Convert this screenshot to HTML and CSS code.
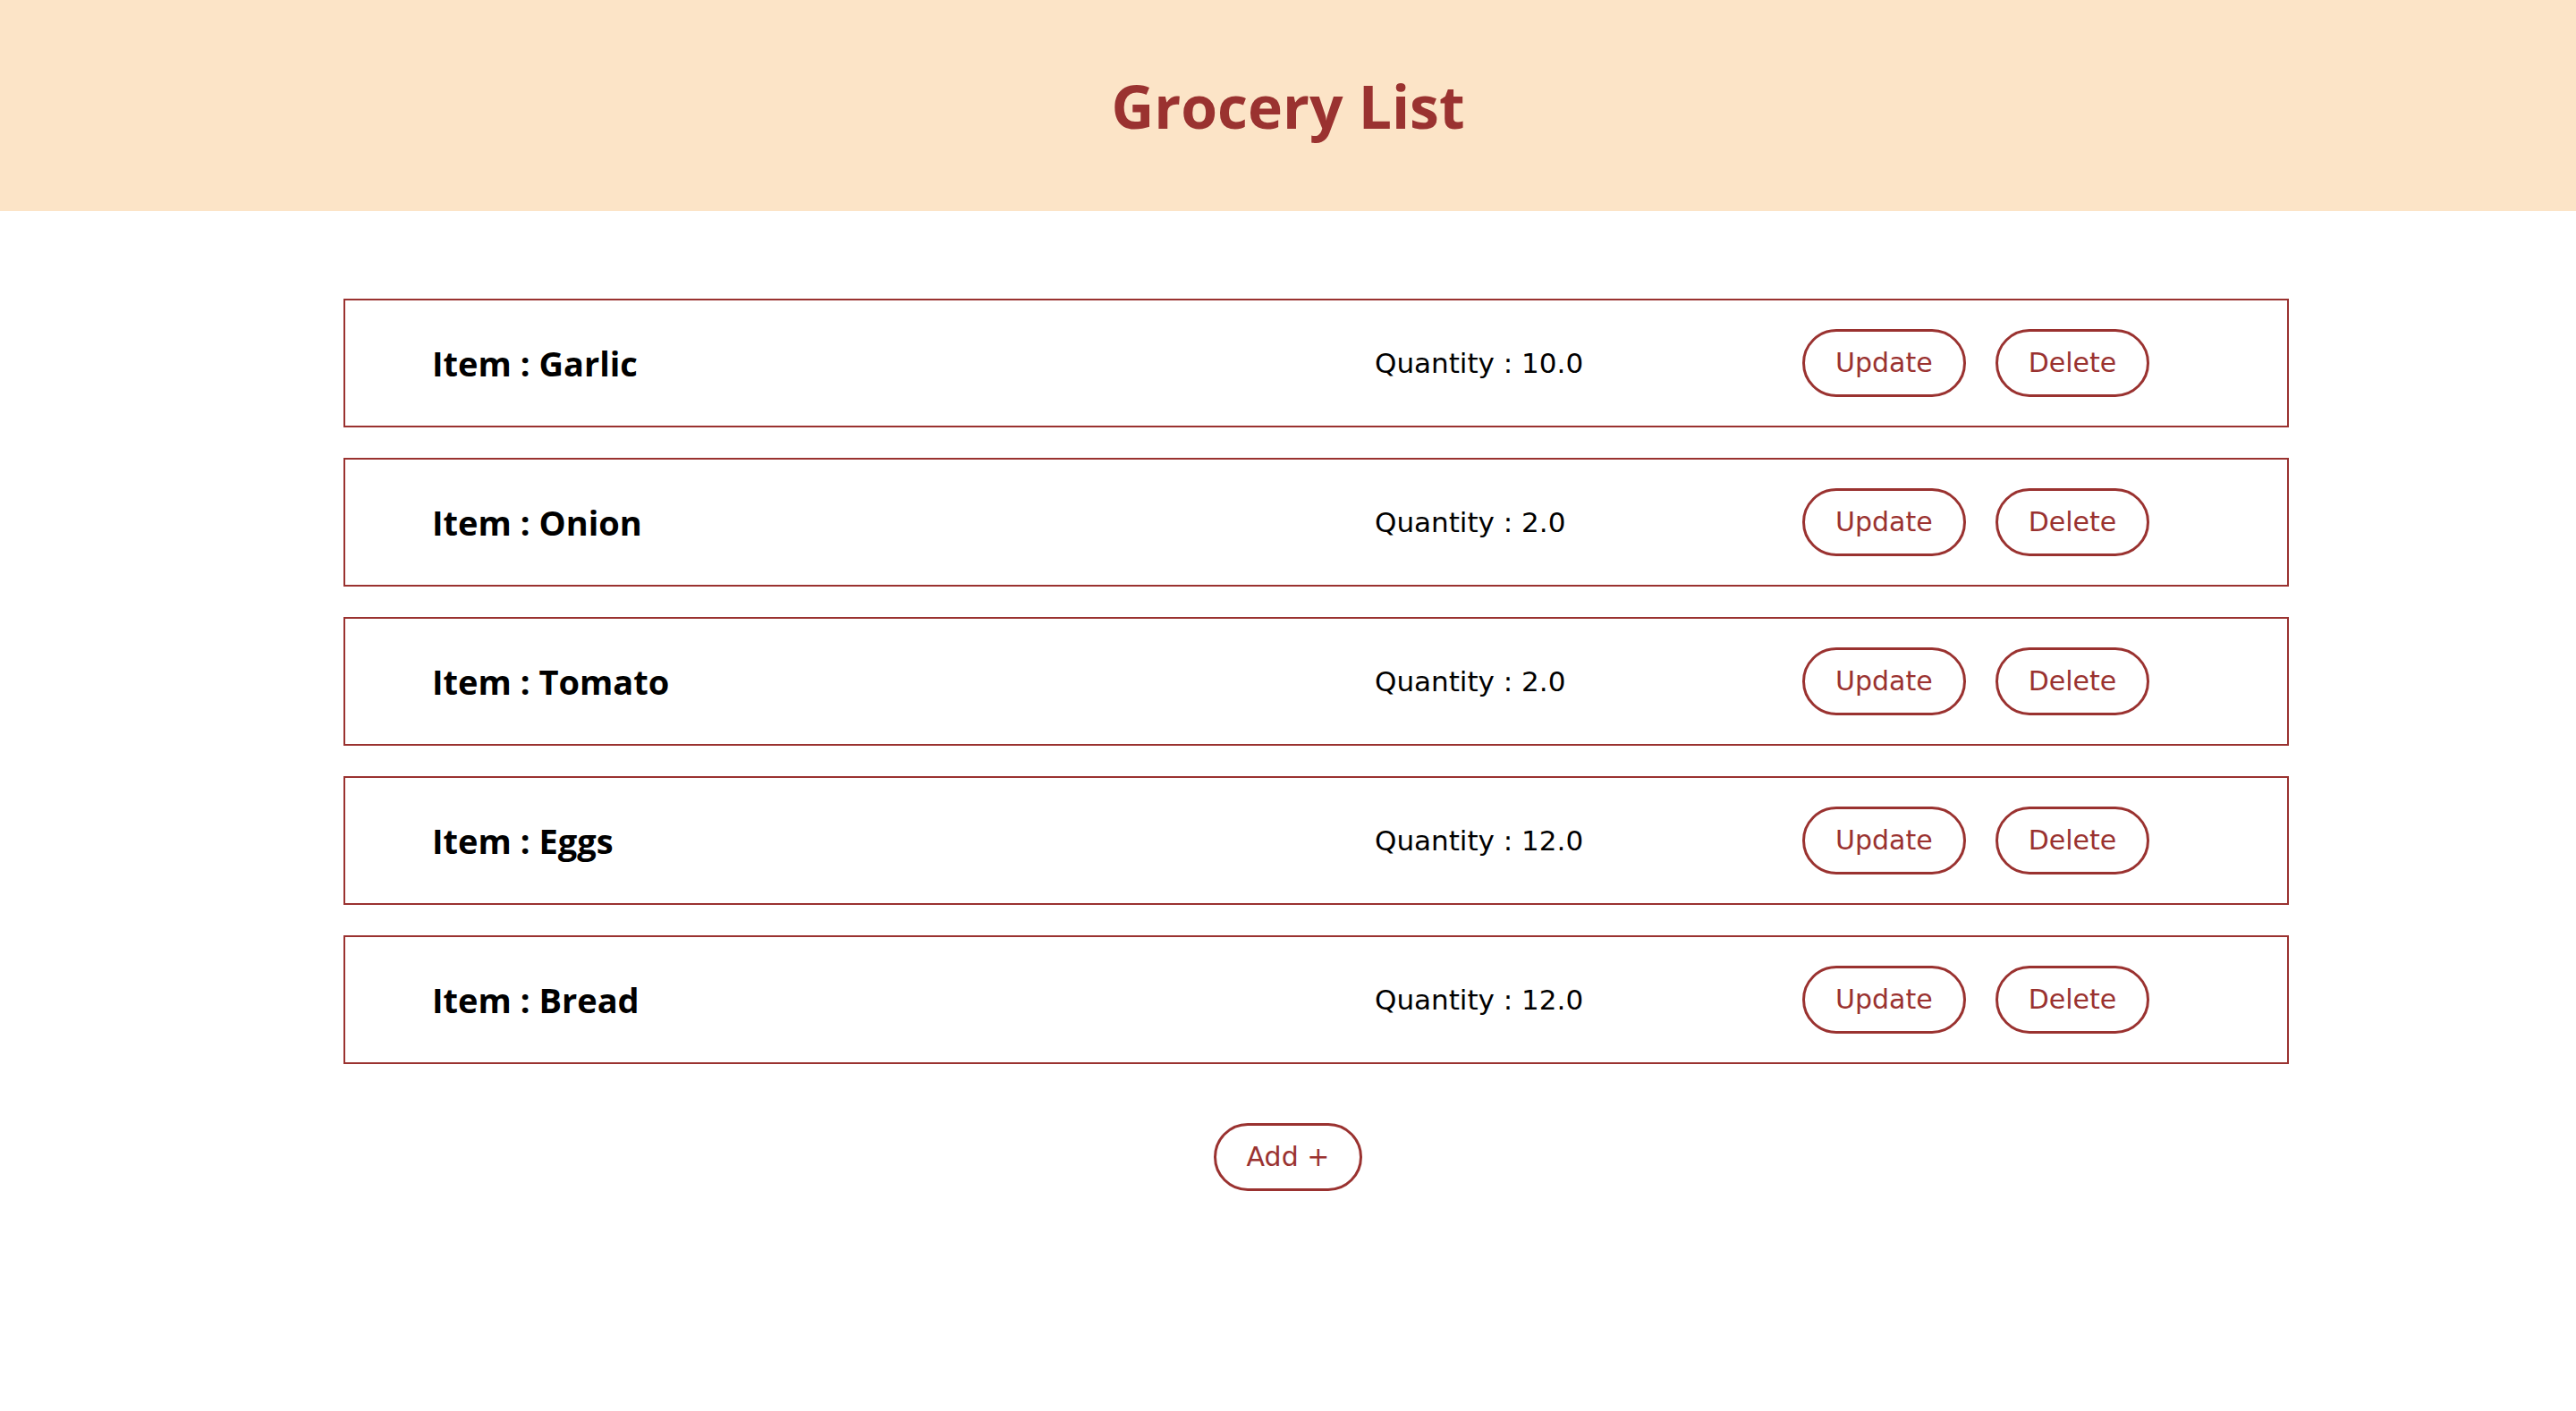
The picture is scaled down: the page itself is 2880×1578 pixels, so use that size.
FILE: index.html
```html
<!DOCTYPE html>
<html lang="en">
<head>
<meta charset="utf-8">
<title>Grocery List</title>
<link rel="stylesheet" href="styles.css">
</head>
<body>
<header class="header">
  <h1 class="title">Grocery List</h1>
</header>
<main class="main">
  <ul class="list">
    <li class="row">
      <span class="item">Item : Garlic</span>
      <span class="qty">Quantity : 10.0</span>
      <div class="actions"><button class="btn">Update</button><button class="btn">Delete</button></div>
    </li>
    <li class="row">
      <span class="item">Item : Onion</span>
      <span class="qty">Quantity : 2.0</span>
      <div class="actions"><button class="btn">Update</button><button class="btn">Delete</button></div>
    </li>
    <li class="row">
      <span class="item">Item : Tomato</span>
      <span class="qty">Quantity : 2.0</span>
      <div class="actions"><button class="btn">Update</button><button class="btn">Delete</button></div>
    </li>
    <li class="row">
      <span class="item">Item : Eggs</span>
      <span class="qty">Quantity : 12.0</span>
      <div class="actions"><button class="btn">Update</button><button class="btn">Delete</button></div>
    </li>
    <li class="row">
      <span class="item">Item : Bread</span>
      <span class="qty">Quantity : 12.0</span>
      <div class="actions"><button class="btn">Update</button><button class="btn">Delete</button></div>
    </li>
  </ul>
  <div class="add-wrap"><button class="btn add">Add +</button></div>
</main>
</body>
</html>
```

FILE: styles.css
```css
html, body {
  margin: 0;
  padding: 0;
  background: #ffffff;
}
body {
  font-family: "DejaVu Sans", "Open Sans", sans-serif;
  color: #000;
}
.header {
  height: 236px;
  background: #fce4c7;
  display: flex;
  align-items: center;
  justify-content: center;
}
.title {
  margin: 0;
  font-family: "Open Sans", sans-serif;
  font-weight: 700;
  font-size: 66px;
  line-height: 1;
  color: #9a3230;
}
.main {
  padding-top: 98px;
}
.list {
  list-style: none;
  margin: 0 0 0 384px;
  padding: 0;
  width: 2175px;
  display: flex;
  flex-direction: column;
  gap: 34px;
}
.row {
  box-sizing: border-box;
  height: 144px;
  border: 2px solid #9a3230;
  padding-left: 97px;
  display: flex;
  align-items: center;
}
.item {
  width: 1054px;
  font-family: "Open Sans", sans-serif;
  font-weight: 700;
  font-size: 38px;
}
.qty {
  width: 478px;
  font-size: 31px;
}
.actions {
  display: flex;
  gap: 33px;
}
.btn {
  box-sizing: border-box;
  height: 76px;
  padding: 0 34px;
  border: 3px solid #9a3230;
  border-radius: 40px;
  background: #fff;
  color: #9a3230;
  font-family: "DejaVu Sans", sans-serif;
  font-size: 30px;
  line-height: 1;
}
.add-wrap {
  display: flex;
  justify-content: center;
  padding-top: 66px;
}
```
